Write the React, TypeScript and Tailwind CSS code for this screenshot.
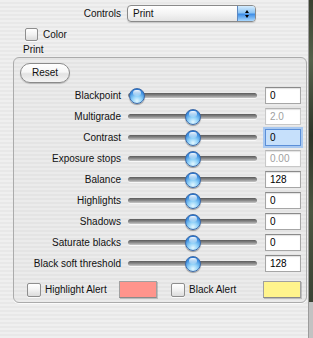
import React from "react";

type Row = {
  label: string;
  value: string;
  thumb: string;
  disabled?: boolean;
  focused?: boolean;
};

const rows: Row[] = [
  { label: "Blackpoint", value: "0", thumb: "left-[1px]" },
  { label: "Multigrade", value: "2.0", thumb: "left-[57px]", disabled: true },
  { label: "Contrast", value: "0", thumb: "left-[57px]", focused: true },
  { label: "Exposure stops", value: "0.00", thumb: "left-[57px]", disabled: true },
  { label: "Balance", value: "128", thumb: "left-[57px]" },
  { label: "Highlights", value: "0", thumb: "left-[57px]" },
  { label: "Shadows", value: "0", thumb: "left-[57px]" },
  { label: "Saturate blacks", value: "0", thumb: "left-[57px]" },
  { label: "Black soft threshold", value: "128", thumb: "left-[57px]" },
];

function Checkbox({ size }: { size: string }) {
  return (
    <div
      className={`${size} shrink-0 rounded-[2px] border border-[#8e8e8e] bg-[linear-gradient(180deg,#ffffff,#f2f2f2_50%,#dcdcdc)] shadow-[0_1px_0_rgba(255,255,255,0.8)]`}
    />
  );
}

function Thumb({ cls }: { cls: string }) {
  return (
    <div
      className={`absolute top-1/2 -translate-y-1/2 ${cls} h-[16px] w-[16px] rounded-full border border-[#3c6aa8] bg-[radial-gradient(circle_at_50%_85%,#e4f8ff_0%,#8fd0f8_35%,#3b8ee0_70%,#1c5fbf_100%)] shadow-[0_1px_1px_rgba(0,0,0,0.35)]`}
    >
      <div className="absolute left-[3px] top-[1px] h-[6px] w-[8px] rounded-full bg-[linear-gradient(180deg,rgba(255,255,255,0.95),rgba(255,255,255,0.15))]" />
    </div>
  );
}

function Slider({ thumb }: { thumb: string }) {
  return (
    <div className="relative ml-[7px] flex h-[21px] w-[129px] items-center">
      <div className="h-[5px] w-full rounded-full bg-[linear-gradient(180deg,#5a5a5a,#8a8a8a_50%,#c8c8c8)] shadow-[0_1px_0_rgba(255,255,255,0.7)]" />
      <Thumb cls={thumb} />
    </div>
  );
}

function Field({ row }: { row: Row }) {
  if (row.focused) {
    return (
      <div className="ml-[8px] flex h-[17px] w-[36px] items-center border border-[#5b8fd8] bg-[#c6e0fb] pl-[4px] text-[#000] shadow-[0_0_0_2px_#a8c8f0]">
        {row.value}
      </div>
    );
  }
  return (
    <div
      className={`ml-[8px] flex h-[17px] w-[36px] items-center border bg-white pl-[4px] shadow-[inset_0_1px_1px_rgba(0,0,0,0.12)] ${
        row.disabled
          ? "border-[#c8c8c8] border-t-[#b4b4b4] text-[#a0a0a0]"
          : "border-[#a6a6a6] border-t-[#8a8a8a] text-[#000]"
      }`}
    >
      {row.value}
    </div>
  );
}

export default function App() {
  return (
    <div
      className="flex h-[338px] w-[313px] overflow-hidden text-[10px] leading-[12px] text-[#111]"
      style={{ fontFamily: '"Liberation Sans", Arial, sans-serif' }}
    >
      <div className="flex h-full w-[309px] shrink-0 flex-col border-r border-[#9c9c9c] bg-[repeating-linear-gradient(180deg,#efefef_0px,#efefef_2px,#e8e8e8_2px,#e8e8e8_4px)] pt-[5px]">
        {/* Controls row */}
        <div className="flex h-[17px] items-center">
          <div className="w-[121px] text-right">Controls</div>
          <div className="ml-[6px] flex h-[17px] w-[129px] items-center rounded-[4px] border border-[#8a8a8a] bg-[linear-gradient(180deg,#ffffff,#f4f4f4_50%,#e4e4e4)] shadow-[0_1px_1px_rgba(0,0,0,0.15)]">
            <div className="flex-1 pl-[5px]">Print</div>
            <div className="flex h-full w-[18px] flex-col items-center justify-center gap-[2px] rounded-r-[3px] border-l border-[#5d88c0] bg-[linear-gradient(180deg,#d4ecff,#8cc4f4_45%,#3e8ee6_55%,#a8d8ff)]">
              <div className="h-0 w-0 border-x-[2.5px] border-b-[3px] border-x-transparent border-b-black" />
              <div className="h-0 w-0 border-x-[2.5px] border-t-[3px] border-x-transparent border-t-black" />
            </div>
          </div>
        </div>

        {/* Color checkbox */}
        <div className="mt-[6px] flex h-[13px] items-center pl-[25px]">
          <Checkbox size="h-[13px] w-[13px]" />
          <span className="ml-[5px]">Color</span>
        </div>

        {/* Print label */}
        <div className="mt-[3px] pl-[23px]">Print</div>

        {/* Group box */}
        <div className="ml-[13px] mt-[1px] flex h-[246px] w-[294px] flex-col rounded-[6px] border border-[#ababab] bg-[rgba(0,0,0,0.015)] shadow-[0_1px_0_rgba(255,255,255,0.8)]">
          <div className="pl-[6px] pt-[5px]">
            <div className="flex h-[20px] w-[50px] items-center justify-center rounded-full border border-[#8a8a8a] bg-[linear-gradient(180deg,#ffffff,#f6f6f6_45%,#e2e2e2_55%,#f4f4f4)] shadow-[0_1px_1px_rgba(0,0,0,0.2)]">
              Reset
            </div>
          </div>

          <div className="mt-[2px] flex flex-col">
            {rows.map((row) => (
              <div key={row.label} className="flex h-[21px] items-center">
                <div className="w-[107px] text-right">{row.label}</div>
                <Slider thumb={row.thumb} />
                <Field row={row} />
              </div>
            ))}
          </div>

          <div className="mt-[7px] flex h-[17px] items-center pl-[13px]">
            <Checkbox size="h-[14px] w-[14px]" />
            <span className="ml-[4px] w-[74px]">Highlight Alert</span>
            <div className="h-[17px] w-[38px] border border-[#a0a0a0] border-b-[#8a8a8a] bg-[#ff948c] shadow-[1px_1px_0_rgba(0,0,0,0.18)]" />
            <div className="ml-[14px]">
              <Checkbox size="h-[14px] w-[14px]" />
            </div>
            <span className="ml-[4px] w-[74px]">Black Alert</span>
            <div className="h-[17px] w-[38px] border border-[#a0a0a0] border-b-[#8a8a8a] bg-[#fff48c] shadow-[1px_1px_0_rgba(0,0,0,0.18)]" />
          </div>
        </div>
      </div>

      {/* right edge: background photo strip */}
      <div className="flex h-full w-[4px] flex-col">
        <div className="h-[302px] bg-[linear-gradient(180deg,#3a4030,#55604a_20%,#2e3428_45%,#4b5540_70%,#3a4234)]" />
        <div className="flex-1 bg-[#c2c2c2]" />
      </div>
    </div>
  );
}
